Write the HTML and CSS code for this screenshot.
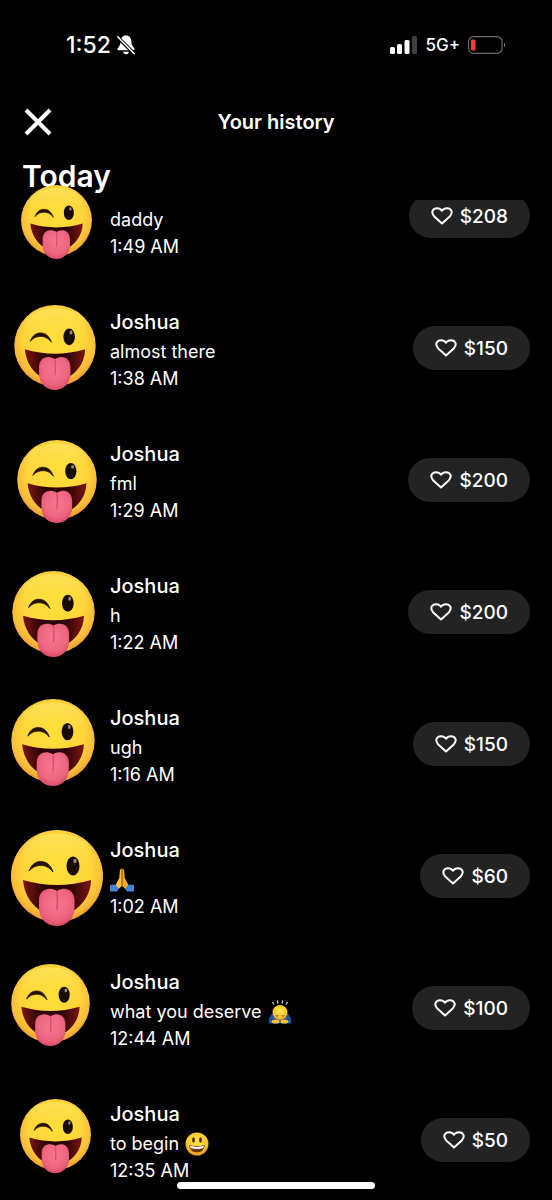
FILE: index.html
```
<!DOCTYPE html>
<html lang="en">
<head>
    <meta charset="UTF-8">
    <meta name="viewport" content="width=device-width, initial-scale=1.0">
    <title>Your history</title>
    <link rel="stylesheet" href="styles.css">
</head>
<body>

    <!-- Shared shapes -->
    <svg class="defs" aria-hidden="true">
        <defs>
            <radialGradient id="faceFill" cx="0.5" cy="0.42" r="0.58">
                <stop offset="0" stop-color="#ffdf38"/>
                <stop offset="0.65" stop-color="#fdd539"/>
                <stop offset="0.87" stop-color="#fabb3a"/>
                <stop offset="1" stop-color="#ee9a30"/>
            </radialGradient>
            <linearGradient id="faceShine" x1="0" y1="0" x2="0" y2="1">
                <stop offset="0" stop-color="#ffea70" stop-opacity="0.55"/>
                <stop offset="1" stop-color="#ffe040" stop-opacity="0"/>
            </linearGradient>
            <linearGradient id="mouthFill" x1="0" y1="0" x2="1" y2="0">
                <stop offset="0" stop-color="#7c1612"/>
                <stop offset="0.3" stop-color="#2e0305"/>
                <stop offset="0.7" stop-color="#2e0305"/>
                <stop offset="1" stop-color="#7c1612"/>
            </linearGradient>
            <radialGradient id="tongueFill" cx="0.5" cy="0.4" r="0.65">
                <stop offset="0" stop-color="#f4788f"/>
                <stop offset="0.65" stop-color="#ee667f"/>
                <stop offset="1" stop-color="#d94565"/>
            </radialGradient>
            <radialGradient id="smileFill" cx="0.5" cy="0.4" r="0.6">
                <stop offset="0" stop-color="#ffe14a"/>
                <stop offset="0.7" stop-color="#fdc933"/>
                <stop offset="1" stop-color="#ee9420"/>
            </radialGradient>
        </defs>
        <symbol id="wink" viewBox="0 0 92 96">
            <circle cx="46" cy="46" r="46" fill="url(#faceFill)"/>
            <ellipse cx="46" cy="23" rx="35" ry="19" fill="url(#faceShine)"/>
            <path d="M18 41 C21 33 26 31.500 30 31.500 C36 31.500 40 36 42 42 C38 37 34 35.500 30 35.500 C25 35.500 22 37 18 41Z" fill="#241005" stroke="#241005" stroke-width="0.8" stroke-linejoin="round"/>
            <ellipse cx="62" cy="36" rx="6.5" ry="9.5" fill="#160b06"/>
            <ellipse cx="64" cy="31" rx="1.6" ry="2.2" fill="#a08a80"/>
            <path d="M12 50 Q46 60 80 50 C80 65 70 78 58 83 H34 C22 78 13 65 12 50Z" fill="url(#mouthFill)"/>
            <path d="M28 70 C28 61 35 58 41 59 Q44 59.500 46 61 Q48 59.500 51 59 C57 58 63 61 63.500 70 V78 C63.500 89 55 96 46 96 C36 96 28 89 28 78Z" fill="url(#tongueFill)"/>
            <path d="M46 62 Q47 71 46 79" fill="none" stroke="#d94b69" stroke-width="1.5" stroke-linecap="round"/>
        </symbol>
        <symbol id="heart" viewBox="0 0 22 18">
            <path d="M11 16.5 L3 9.2 C-0.5 5 2 1.2 6 1.2 C8.3 1.2 10 2.2 11 3.7 C12 2.2 13.7 1.2 16 1.2 C20 1.2 22.5 5 19 9.2Z" fill="none" stroke="#fff" stroke-width="2" stroke-linejoin="round"/>
        </symbol>
    </svg>

    <!-- Phone status bar -->
    <div class="status-bar">
        <div class="status-left">
            <span class="clock">1:52</span>
            <svg class="bell" viewBox="0 0 18 20" role="img" aria-label="Silent mode">
                <path d="M9 0.5 C5.5 0.5 3.8 3 3.6 7 C3.4 11 1 12 0.5 14 Q0.3 15.3 1.6 15.3 L16.4 15.3 Q17.7 15.3 17.5 14 C17 12 14.6 11 14.4 7 C14.2 3 12.5 0.5 9 0.5Z" fill="#fff"/>
                <path d="M6 16.7 H12 Q11.3 19.3 9 19.3 Q6.7 19.3 6 16.7Z" fill="#fff"/>
                <path d="M0 1.5 L17.5 19" stroke="#000" stroke-width="3.500"/>
                <path d="M0.7 1.7 L17.3 18.7" stroke="#fff" stroke-width="1.5" stroke-linecap="round"/>
            </svg>
        </div>
        <div class="status-right">
            <svg class="signal" viewBox="0 0 27 18" role="img" aria-label="Signal strength">
                <rect x="0" y="11" width="5" height="7" rx="1.5" fill="#fff"/>
                <rect x="7" y="8" width="5" height="10" rx="1.5" fill="#fff"/>
                <rect x="14.500" y="4" width="5" height="14" rx="1.5" fill="#fff"/>
                <rect x="22" y="0" width="5" height="18" rx="1.5" fill="#404040"/>
            </svg>
            <span class="network">5G+</span>
            <svg class="battery" viewBox="0 0 38 18" role="img" aria-label="Battery low">
                <rect x="0.6" y="0.6" width="33.500" height="16.800" rx="5" fill="none" stroke="#6c6c6c" stroke-width="1.2"/>
                <rect x="3" y="3.500" width="4.500" height="11" rx="1.5" fill="#ff3b30"/>
                <path d="M36 6.5 Q38 9 36 11.5Z" fill="#8a8a8a"/>
            </svg>
        </div>
    </div>

    <header class="header">
        <button class="close" type="button" aria-label="Close">
            <svg viewBox="0 0 28 28"><path d="M2 2 L26 26 M26 2 L2 26" stroke="#fff" stroke-width="4"/></svg>
        </button>
        <h1>Your history</h1>
    </header>

    <h2 class="day">Today</h2>

    <!-- Payments, scrolled under the day heading -->
    <main class="history">
        <ul class="payments">
            <li class="payment">
                <div class="details details-scrolled">
                    <p>daddy</p>
                    <time>1:49 AM</time>
                </div>
                <button class="amount" type="button"><svg><use href="#heart"/></svg>$208</button>
            </li>
            <li class="payment">
                <div class="details">
                    <h3>Joshua</h3>
                    <p>almost there</p>
                    <time>1:38 AM</time>
                </div>
                <button class="amount" type="button"><svg><use href="#heart"/></svg>$150</button>
            </li>
            <li class="payment">
                <div class="details">
                    <h3>Joshua</h3>
                    <p>fml</p>
                    <time>1:29 AM</time>
                </div>
                <button class="amount" type="button"><svg><use href="#heart"/></svg>$200</button>
            </li>
            <li class="payment">
                <div class="details">
                    <h3>Joshua</h3>
                    <p>h</p>
                    <time>1:22 AM</time>
                </div>
                <button class="amount" type="button"><svg><use href="#heart"/></svg>$200</button>
            </li>
            <li class="payment">
                <div class="details">
                    <h3>Joshua</h3>
                    <p>ugh</p>
                    <time>1:16 AM</time>
                </div>
                <button class="amount" type="button"><svg><use href="#heart"/></svg>$150</button>
            </li>
            <li class="payment">
                <div class="details">
                    <h3>Joshua</h3>
                    <p>
                        <svg class="emoji" viewBox="0 0 24 24" role="img" aria-label="Folded hands">
                            <path d="M11.800 0.500 Q9.800 0.500 9.800 3 L9.300 10 L5.500 17 L8 21.500 L11.800 18Z" fill="#fdc02f"/>
                            <path d="M12.200 0.500 Q14.200 0.500 14.200 3 L14.700 10 L18.500 17 L16 21.500 L12.200 18Z" fill="#f7a928"/>
                            <path d="M12 1 V17" stroke="#a65b12" stroke-width="0.8"/>
                            <path d="M0 17 L5 16.500 L9 20.500 L7 23.500 L0 23.500Z" fill="#3f86d8"/>
                            <path d="M24 17 L19 16.500 L15 20.500 L17 23.500 L24 23.500Z" fill="#3f86d8"/>
                        </svg>
                    </p>
                    <time>1:02 AM</time>
                </div>
                <button class="amount" type="button"><svg><use href="#heart"/></svg>$60</button>
            </li>
            <li class="payment">
                <div class="details">
                    <h3>Joshua</h3>
                    <p>what you deserve
                        <svg class="emoji" viewBox="0 0 24 24" role="img" aria-label="Person bowing">
                            <path d="M4.500 2 L6 4.500 M9.300 0.500 L10 3.500 M14.700 0.500 L14 3.500 M19.500 2 L18 4.500" stroke="#c9cdd2" stroke-width="1.300"/>
                            <path d="M1 23.500 Q0 17 5 13 H19 Q24 17 23 23.500Z" fill="#1d58ad"/>
                            <path d="M3 19 L8 22 M21 19 L16 22" stroke="#103468" stroke-width="1.500"/>
                            <circle cx="12" cy="12.500" r="7.500" fill="url(#smileFill)"/>
                            <path d="M7.500 15.500 Q9 17 10.500 15.500 M13.500 15.500 Q15 17 16.500 15.500" fill="none" stroke="#8a4b10" stroke-width="1"/>
                            <ellipse cx="7.500" cy="21.500" rx="4" ry="2" fill="#fbc132"/>
                            <ellipse cx="16.500" cy="21.500" rx="4" ry="2" fill="#fbc132"/>
                        </svg>
                    </p>
                    <time>12:44 AM</time>
                </div>
                <button class="amount" type="button"><svg><use href="#heart"/></svg>$100</button>
            </li>
            <li class="payment">
                <div class="details">
                    <h3>Joshua</h3>
                    <p>to begin
                        <svg class="emoji" viewBox="0 0 24 24" role="img" aria-label="Grinning face">
                            <circle cx="12" cy="12" r="11.500" fill="url(#smileFill)"/>
                            <ellipse cx="8.500" cy="8" rx="1.400" ry="2.700" fill="#4d2810"/>
                            <ellipse cx="15.500" cy="8" rx="1.400" ry="2.700" fill="#4d2810"/>
                            <path d="M4 13 Q12 15.500 20 13 Q19 20.500 12 20.500 Q5 20.500 4 13Z" fill="#6d3613"/>
                            <path d="M5 13.800 Q12 16 19 13.800 L18.300 16 Q12 17.800 5.700 16Z" fill="#fff"/>
                        </svg>
                    </p>
                    <time>12:35 AM</time>
                </div>
                <button class="amount" type="button"><svg><use href="#heart"/></svg>$50</button>
            </li>
        </ul>
    </main>

    <!-- Stickers placed over the avatars -->
    <div class="stickers" aria-hidden="true">
        <svg class="sticker sticker-1"><use href="#wink"/></svg>
        <svg class="sticker sticker-2"><use href="#wink"/></svg>
        <svg class="sticker sticker-3"><use href="#wink"/></svg>
        <svg class="sticker sticker-4"><use href="#wink"/></svg>
        <svg class="sticker sticker-5"><use href="#wink"/></svg>
        <svg class="sticker sticker-6"><use href="#wink"/></svg>
        <svg class="sticker sticker-7"><use href="#wink"/></svg>
        <svg class="sticker sticker-8"><use href="#wink"/></svg>
    </div>

    <div class="home-indicator"></div>

</body>
</html>
```
FILE: styles.css
```
* {
    margin: 0;
    padding: 0;
    box-sizing: border-box;
}

body {
    position: relative;
    display: flex;
    flex-direction: column;
    height: 100vh;
    overflow: hidden;
    font-family: Inter, "Liberation Sans", sans-serif;
    background-color: #000;
    color: #fff;
}

svg {
    display: block;
}

button {
    border: none;
    font-family: inherit;
    color: #fff;
    cursor: pointer;
}

.defs {
    position: absolute;
    width: 0;
    height: 0;
}

/* Status bar */
.status-bar {
    display: flex;
    flex-shrink: 0;
    justify-content: space-between;
    align-items: center;
    height: 90px;
    padding: 0 46px 0 66px;
}

.status-left, .status-right {
    display: flex;
    align-items: center;
}

.status-left {
    gap: 6px;
}

.status-right {
    gap: 8px;
}

.clock {
    font-size: 23px;
    font-weight: 500;
}

.bell {
    width: 18px;
    height: 20px;
}

.signal {
    width: 27px;
    height: 18px;
}

.network {
    font-size: 17px;
    font-weight: 500;
}

.battery {
    width: 38px;
    height: 18px;
}

/* Header */
.header {
    display: grid;
    flex-shrink: 0;
    grid-template-columns: 28px 1fr 28px;
    align-items: center;
    height: 64px;
    padding: 0 24px;
}

.header h1 {
    text-align: center;
    font-size: 20px;
    font-weight: 600;
}

.close {
    width: 28px;
    height: 28px;
    background: none;
}

.day {
    flex-shrink: 0;
    height: 46px;
    padding-left: 22px;
    font-size: 30px;
    font-weight: 600;
    line-height: 44px;
}

/* Payment list */
.history {
    flex: 1;
    min-height: 0;
    overflow: hidden;
}

.payments {
    margin-top: -50px;
    list-style: none;
}

.payment {
    display: flex;
    justify-content: space-between;
    align-items: center;
    height: 132px;
    padding: 0 22px 0 110px;
}

.details {
    padding-top: 2px;
}

.details-scrolled {
    padding-top: 34px;
}

.details h3 {
    font-size: 20px;
    font-weight: 500;
    line-height: 32px;
}

.details p, .details time {
    display: flex;
    align-items: center;
    gap: 6px;
    font-size: 18px;
    line-height: 27px;
    height: 27px;
}

.emoji {
    width: 24px;
    height: 24px;
}

.amount {
    display: flex;
    align-items: center;
    gap: 7px;
    height: 44px;
    padding: 0 22px;
    border-radius: 22px;
    background-color: #232323;
    font-size: 19px;
    font-weight: 500;
}

.amount svg {
    width: 22px;
    height: 18px;
}

/* Stickers */
.sticker {
    position: absolute;
}

.sticker-1 {
    left: 21px;
    top: 185px;
    width: 71px;
    height: 74px;
}

.sticker-2 {
    left: 14px;
    top: 305px;
    width: 82px;
    height: 85px;
}

.sticker-3 {
    left: 17px;
    top: 440px;
    width: 80px;
    height: 83px;
}

.sticker-4 {
    left: 12px;
    top: 571px;
    width: 83px;
    height: 86px;
}

.sticker-5 {
    left: 11px;
    top: 699px;
    width: 84px;
    height: 87px;
}

.sticker-6 {
    left: 11px;
    top: 830px;
    width: 92px;
    height: 96px;
}

.sticker-7 {
    left: 11px;
    top: 964px;
    width: 79px;
    height: 82px;
}

.sticker-8 {
    left: 20px;
    top: 1099px;
    width: 71px;
    height: 74px;
}

.home-indicator {
    position: absolute;
    bottom: 11px;
    left: 50%;
    width: 198px;
    height: 7px;
    margin-left: -99px;
    border-radius: 4px;
    background-color: #fff;
}
```
